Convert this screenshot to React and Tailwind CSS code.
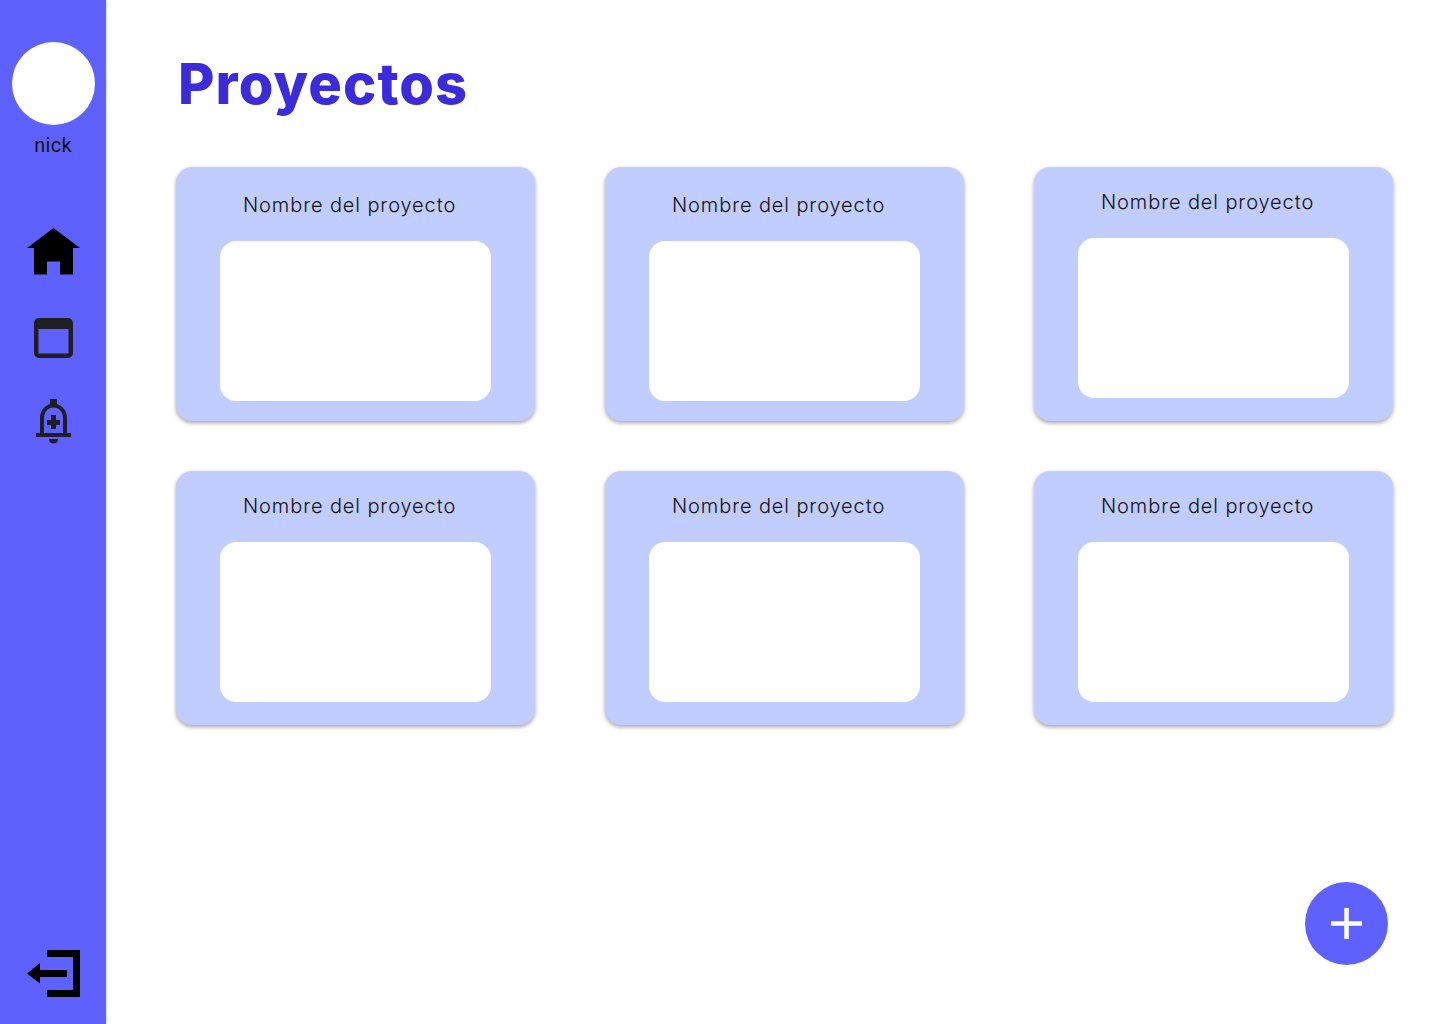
const cards = [
  { id: 1, top: 'pt-[26px]' },
  { id: 2, top: 'pt-[26px]' },
  { id: 3, top: 'pt-[23px]' },
  { id: 4, top: 'pt-[23px]' },
  { id: 5, top: 'pt-[23px]' },
  { id: 6, top: 'pt-[23px]' },
];

function HomeIcon() {
  return (
    <svg width="53" height="47" viewBox="0 0 53 47" className="block">
      <path d="M26.500 0 53 20H46V46.500H33V33.500H20V46.500H7V20H0Z" fill="#000" />
    </svg>
  );
}

function WindowIcon() {
  return (
    <svg width="39" height="40" viewBox="0 0 39 40" className="block">
      <path
        fillRule="evenodd"
        d="M5 0H34A5 5 0 0 1 39 5V35A5 5 0 0 1 34 40H5A5 5 0 0 1 0 35V5A5 5 0 0 1 5 0ZM4.500 11V35.500H34.500V11Z"
        fill="#1e1e24"
      />
    </svg>
  );
}

function BellIcon() {
  return (
    <svg width="35" height="45" viewBox="0 0 35 45" className="block">
      <path
        fillRule="evenodd"
        d="M14 0H21V5C27 7 31 12 31 19V34H35V38H0V34H4V19C4 12 8 7 14 5ZM17.500 8.500C12 8.500 8 13 8 19V34H27V19C27 13 23 8.500 17.500 8.500Z"
        fill="#1e1e24"
      />
      <path d="M15 16H20V21H24V26H20V30H15V26H11V21H15Z" fill="#1e1e24" />
      <path d="M13 40H22C22 43 20 44.500 17.500 44.500S13 43 13 40Z" fill="#1e1e24" />
    </svg>
  );
}

function ExitIcon() {
  return (
    <svg width="53" height="47" viewBox="0 0 53 47" className="block">
      <path d="M20 0H53V47H20V40H46V7H20Z" fill="#000" />
      <path d="M0 23.500 13 13V20H40V27H13V33.500Z" fill="#000" />
    </svg>
  );
}

function ProjectCard({ top }) {
  return (
    <div className={`h-[254px] w-[359px] rounded-2xl bg-[#c2cdff] shadow-[0_2px_4px_rgba(0,0,0,0.36)] ${top}`}>
      <p className="pl-[67px] text-[20px] leading-[25px] font-light tracking-[0.9px] text-[#111] [font-family:'Inter',sans-serif]">
        Nombre del proyecto
      </p>
      <div className="mx-auto mt-[23px] h-[160px] w-[271px] rounded-2xl bg-white" />
    </div>
  );
}

export default function App() {
  return (
    <div className="flex h-[1024px] w-[1440px] overflow-hidden bg-white">
      <aside className="flex w-[106px] shrink-0 flex-col items-center bg-[#5f61ff] pt-[42px] pb-[27px] shadow-[1px_0_3px_rgba(0,0,0,0.15)]">
        <div className="h-[83px] w-[83px] rounded-full bg-white" />
        <span className="mt-[8px] text-[20px] leading-[24px] tracking-[0.3px] text-[#111] [font-family:'Roboto',sans-serif]">nick</span>
        <div className="mt-[71px]"><HomeIcon /></div>
        <div className="mt-[43px]"><WindowIcon /></div>
        <div className="mt-[41px]"><BellIcon /></div>
        <div className="mt-auto"><ExitIcon /></div>
      </aside>

      <main className="relative flex-1 pl-[70px]">
        <h1 className="mt-[51px] pl-[2px] text-[56px] leading-[67px] font-extrabold tracking-[1.1px] text-[#3a2bdb] [font-family:'Inter',sans-serif]">
          Proyectos
        </h1>
        <div className="mt-[49px] grid grid-cols-[359px_359px_359px] gap-x-[70px] gap-y-[50px]">
          {cards.map((card) => (
            <ProjectCard key={card.id} top={card.top} />
          ))}
        </div>

        <button className="absolute right-[52px] bottom-[59px] flex h-[83px] w-[83px] items-center justify-center rounded-full bg-[#5f61ff]">
          <svg width="31" height="31" viewBox="0 0 31 31">
            <path d="M13.250 0H17.750V13.250H31V17.750H17.750V31H13.250V17.750H0V13.250H13.250Z" fill="#fff" />
          </svg>
        </button>
      </main>
    </div>
  );
}
